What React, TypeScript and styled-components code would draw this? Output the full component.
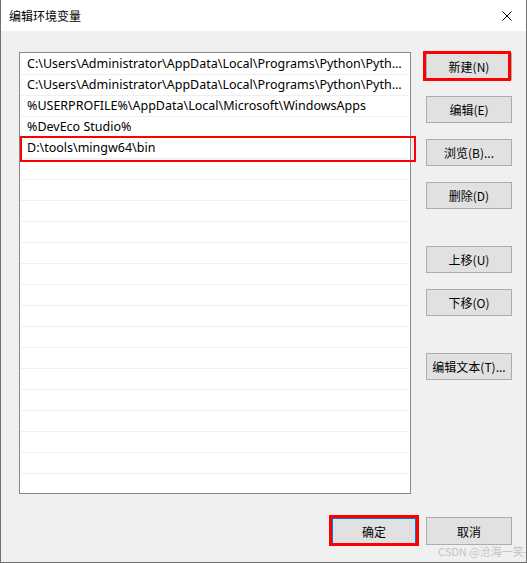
import React from 'react';
import styled, { createGlobalStyle } from 'styled-components';

const GlobalStyle = createGlobalStyle`
  html, body {
    margin: 0;
    padding: 0;
    background: #ffffff;
  }
`;

const paths = [
  'C:\\Users\\Administrator\\AppData\\Local\\Programs\\Python\\Python312\\Scripts\\',
  'C:\\Users\\Administrator\\AppData\\Local\\Programs\\Python\\Python312\\',
  '%USERPROFILE%\\AppData\\Local\\Microsoft\\WindowsApps',
  '%DevEco Studio%',
  'D:\\tools\\mingw64\\bin',
];

const sideButtons = [
  { label: '新建(N)', marked: true },
  { label: '编辑(E)' },
  { label: '浏览(B)...' },
  { label: '删除(D)' },
  { label: '上移(U)', spaced: true },
  { label: '下移(O)' },
  { label: '编辑文本(T)...', spaced: true },
];

const ROW_COUNT = 22;

const App = () => {
  const rows = Array.from({ length: ROW_COUNT }, (_, i) => paths[i] ?? '');
  return (
    <>
      <GlobalStyle />
      <Window>
        <TitleBar>
          <Title>编辑环境变量</Title>
          <CloseIcon width="10" height="10" viewBox="0 0 10 10">
            <path d="M0.5 0.5 L9.5 9.5 M9.5 0.5 L0.5 9.5" stroke="#000" strokeWidth="1" />
          </CloseIcon>
        </TitleBar>
        <Body>
          <ListFrame>
            <PathList>
              {rows.map((text, i) => (
                <Row key={i}>
                  <RowText>{text}</RowText>
                </Row>
              ))}
            </PathList>
            {/* highlight of the newly added entry, drawn over the list edge */}
            <Mark $inset="84px -5px 332px 1px" $width={2} />
          </ListFrame>
          <SideColumn>
            {sideButtons.map((b) => (
              <SideButton key={b.label} $spaced={b.spaced}>
                {b.label}
                {b.marked && <Mark $inset="-3px 0 -2px -4px" $width={3} />}
              </SideButton>
            ))}
          </SideColumn>
        </Body>
        <Footer>
          <DialogButton $primary>
            确定
            <Mark $inset="-4px -4px -3px -4px" $width={3} />
          </DialogButton>
          <DialogButton>取消</DialogButton>
        </Footer>
        <Watermark>CSDN @沧海一笑-dj</Watermark>
      </Window>
    </>
  );
};

const Window = styled.div`
  position: relative;
  width: 527px;
  height: 563px;
  box-sizing: border-box;
  border: 1px solid #707070;
  border-top: none;
  background: #f0f0f0;
  display: flex;
  flex-direction: column;
  overflow: hidden;
  font-family: 'Noto Sans', 'Noto Sans CJK SC', sans-serif;
  font-size: 12px;
  color: #000;
`;

const TitleBar = styled.div`
  height: 31px;
  flex: none;
  background: #ffffff;
  display: flex;
  align-items: center;
  justify-content: space-between;
  padding: 0 14px 0 8px;
`;

const Title = styled.span`
  font-family: 'Noto Sans CJK SC', sans-serif;
  font-size: 12px;
`;

const CloseIcon = styled.svg`
  display: block;
`;

const Body = styled.div`
  display: flex;
  gap: 15px;
  padding: 21px 14px 0 18px;
`;

const ListFrame = styled.div`
  position: relative;
  flex: none;
`;

const PathList = styled.div`
  width: 392px;
  height: 442px;
  box-sizing: border-box;
  border: 1px solid #828790;
  background: #ffffff;
  padding: 1px;
  overflow: hidden;
`;

const Row = styled.div`
  height: 21px;
  box-sizing: border-box;
  border-bottom: 1px solid #efefef;
  padding: 0 0 0 6px;
  line-height: 20px;
  display: flex;
`;

const RowText = styled.span`
  flex: 1;
  min-width: 0;
  font-size: 12.5px;
  white-space: nowrap;
  overflow: hidden;
  text-overflow: ellipsis;
`;

const Mark = styled.span<{ $inset: string; $width: number }>`
  position: absolute;
  inset: ${(p) => p.$inset};
  border: ${(p) => p.$width}px solid #ff0000;
  pointer-events: none;
`;

const SideColumn = styled.div`
  width: 86px;
  display: flex;
  flex-direction: column;
  gap: 16px;
  padding-top: 1px;
`;

const ButtonBase = styled.div`
  position: relative;
  box-sizing: border-box;
  background: #e1e1e1;
  border: 1px solid #adadad;
  display: flex;
  align-items: center;
  justify-content: center;
  font-family: 'Noto Sans CJK SC', sans-serif;
  font-size: 12px;
`;

const SideButton = styled(ButtonBase)<{ $spaced?: boolean }>`
  height: 27px;
  margin-top: ${(p) => (p.$spaced ? '21px' : '0')};
`;

const Footer = styled.div`
  display: flex;
  justify-content: flex-end;
  gap: 9px;
  padding: 23px 14px 0 0;
`;

const DialogButton = styled(ButtonBase)<{ $primary?: boolean }>`
  width: 86px;
  height: 28px;
  ${(p) => p.$primary && 'border: 2px solid #0078d7;'}
`;

const Watermark = styled.span`
  position: absolute;
  left: 437px;
  top: 543px;
  font-family: 'Noto Sans CJK SC', sans-serif;
  font-size: 11px;
  color: #c4c4c4;
  white-space: nowrap;
`;

export default App;
